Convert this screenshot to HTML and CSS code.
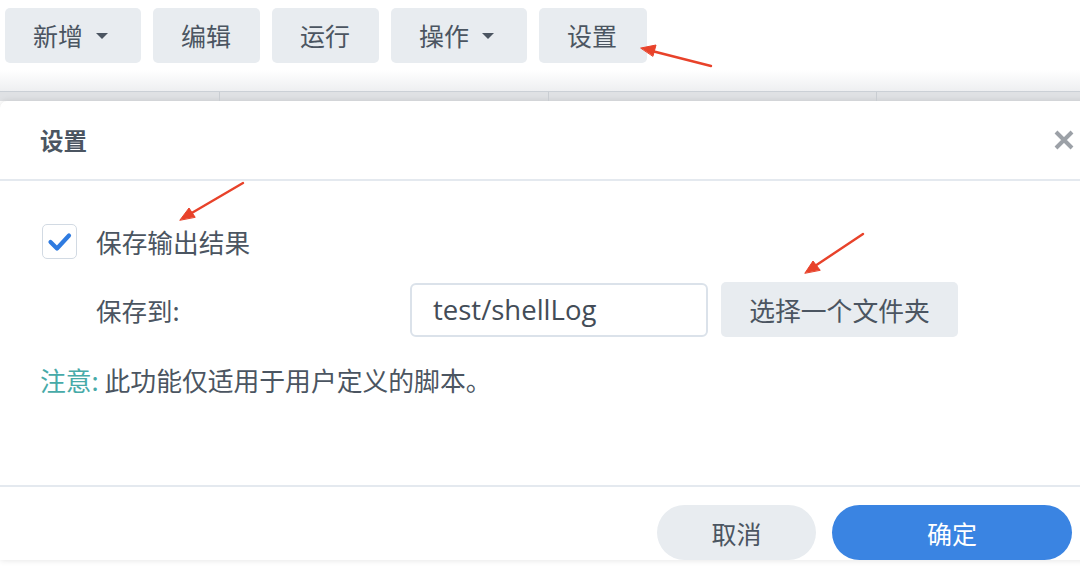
FILE: index.html
```html
<!DOCTYPE html>
<html lang="zh-CN">
<head>
<meta charset="utf-8">
<title>设置</title>
<link rel="stylesheet" href="styles.css">
</head>
<body>
<div class="page">
  <div class="toolbar">
    <button class="tbtn">新增<span class="caret"></span></button>
    <button class="tbtn">编辑</button>
    <button class="tbtn">运行</button>
    <button class="tbtn">操作<span class="caret"></span></button>
    <button class="tbtn">设置</button>
  </div>
  <div class="shade"></div>
  <div class="thead">
    <div class="col c1"></div>
    <div class="col c2"></div>
    <div class="col c3"></div>
    <div class="col c4"></div>
  </div>
  <div class="dialog">
    <div class="dlg-head">
      <div class="dlg-title">设置</div>
      <svg class="close" width="22" height="22" viewBox="0 0 22 22"><path d="M3 3 L19 19 M19 3 L3 19" stroke="#9ca1a7" stroke-width="4" stroke-linecap="butt"/></svg>
    </div>
    <div class="dlg-body">
      <div class="row1">
        <span class="check"><svg width="33" height="33" viewBox="0 0 33 33"><path d="M7.5 17 L14 23.5 L26 10.5" fill="none" stroke="#2f7be0" stroke-width="4.2" stroke-linecap="round" stroke-linejoin="round"/></svg></span>
        <span class="lbl">保存输出结果</span>
      </div>
      <div class="row2">
        <span class="lbl2">保存到:</span>
        <div class="input">test/shellLog</div>
        <button class="pick">选择一个文件夹</button>
      </div>
      <div class="note"><span class="note-key">注意:</span> 此功能仅适用于用户定义的脚本。</div>
    </div>
    <div class="dlg-foot">
      <button class="btn-cancel">取消</button>
      <button class="btn-ok">确定</button>
    </div>
  </div>
  <svg class="arrows" width="1080" height="567" viewBox="0 0 1080 567">
    <g fill="#e8422a" stroke="#e8422a" stroke-linecap="round">
      <line x1="711" y1="66" x2="652" y2="51" stroke-width="2.4"/>
      <polygon points="641,48 656,45 653,56" stroke-width="1"/>
      <line x1="243" y1="183" x2="190" y2="214" stroke-width="2.4"/>
      <polygon points="180,220 189,208 195,217" stroke-width="1"/>
      <line x1="863" y1="234" x2="815" y2="266" stroke-width="2.4"/>
      <polygon points="805,273 813,261 820,270" stroke-width="1"/>
    </g>
  </svg>
</div>
</body>
</html>
```

FILE: styles.css
```css
* { box-sizing: border-box; }
html, body {
  margin: 0;
  padding: 0;
  width: 1080px;
  height: 567px;
  overflow: hidden;
  background: #ffffff;
}
body {
  font-family: "Noto Sans CJK SC", "Noto Sans", sans-serif;
  color: #4b5561;
}
.page {
  position: relative;
  width: 1080px;
  height: 567px;
  overflow: hidden;
}
button {
  font-family: inherit;
  border: none;
  cursor: pointer;
}
.toolbar {
  display: flex;
  gap: 12px;
  padding: 8px 0 0 5px;
  height: 70px;
}
.tbtn {
  height: 55px;
  padding: 0 28px;
  background: #e8ecf0;
  border-radius: 5px;
  font-size: 25px;
  color: #4b5561;
  display: flex;
  align-items: center;
  line-height: 1;
}
.tbtn:nth-child(1) { width: 136px; }
.tbtn:nth-child(2) { width: 107px; }
.tbtn:nth-child(3) { width: 107px; }
.tbtn:nth-child(4) { width: 136px; }
.tbtn:nth-child(5) { width: 108px; }
.caret {
  width: 0;
  height: 0;
  margin-left: 13px;
  border-left: 6px solid transparent;
  border-right: 6px solid transparent;
  border-top: 6px solid #4b5561;
}
.shade {
  height: 22px;
  background: linear-gradient(#ffffff, #eeeff1);
  border-bottom: 1px solid #cbd0d6;
}
.thead {
  display: flex;
  height: 9px;
  background: #dfe1e4;
}
.col { height: 100%; border-right: 1px solid #c9cdd2; }
.c1 { width: 220px; }
.c2 { width: 329px; }
.c3 { width: 328px; }
.c4 { flex: 1; border-right: none; }
.dialog {
  width: 1100px;
  background: #ffffff;
  border-top-left-radius: 7px;
  box-shadow: 0 0 6px rgba(0, 0, 0, 0.12);
}
.dlg-head {
  height: 80px;
  display: flex;
  align-items: center;
  justify-content: space-between;
  padding: 0 0 0 40px;
  border-bottom: 2px solid #e4e9ef;
}
.dlg-title {
  font-size: 23.5px;
  font-weight: 700;
  color: #4b5561;
}
.close {
  margin-right: 25px;
}
.dlg-body {
  height: 306px;
  padding: 43px 0 0 42px;
  border-bottom: 2px solid #e4e9ef;
}
.row1 {
  display: flex;
  align-items: center;
  height: 35px;
}
.check {
  width: 35px;
  height: 35px;
  border: 1px solid #d2dae3;
  border-radius: 5px;
  display: flex;
  align-items: center;
  justify-content: center;
  background: #ffffff;
}
.lbl {
  margin-left: 19px;
  font-size: 25.7px;
  line-height: 1;
}
.row2 {
  display: flex;
  align-items: center;
  margin-top: 23px;
  height: 55px;
  padding-left: 54px;
}
.lbl2 {
  width: 314px;
  font-size: 25.5px;
}
.input {
  width: 298px;
  height: 54px;
  border: 2px solid #dbe2ea;
  border-radius: 6px;
  padding-left: 21px;
  display: flex;
  align-items: center;
  font-family: "Open Sans", "Noto Sans", sans-serif;
  font-size: 27.5px;
  color: #434c57;
}
.pick {
  margin-left: 13px;
  width: 237px;
  height: 55px;
  background: #e8ecf0;
  border-radius: 5px;
  font-size: 25.8px;
  color: #4b5561;
}
.note {
  margin-top: 28px;
  margin-left: -2px;
  font-size: 25.8px;
  line-height: 30px;
  color: #4b5561;
}
.note-key { color: #47aaa8; }
.dlg-foot {
  display: flex;
  padding: 18px 0 0 657px;
  gap: 16px;
}
.btn-cancel {
  width: 159px;
  height: 55px;
  border-radius: 28px;
  background: #e8ecf0;
  font-size: 25px;
  color: #4b5561;
}
.btn-ok {
  width: 240px;
  height: 55px;
  border-radius: 28px;
  background: #3a84e2;
  font-size: 25px;
  color: #ffffff;
}
.arrows {
  position: absolute;
  left: 0;
  top: 0;
  pointer-events: none;
}
```
